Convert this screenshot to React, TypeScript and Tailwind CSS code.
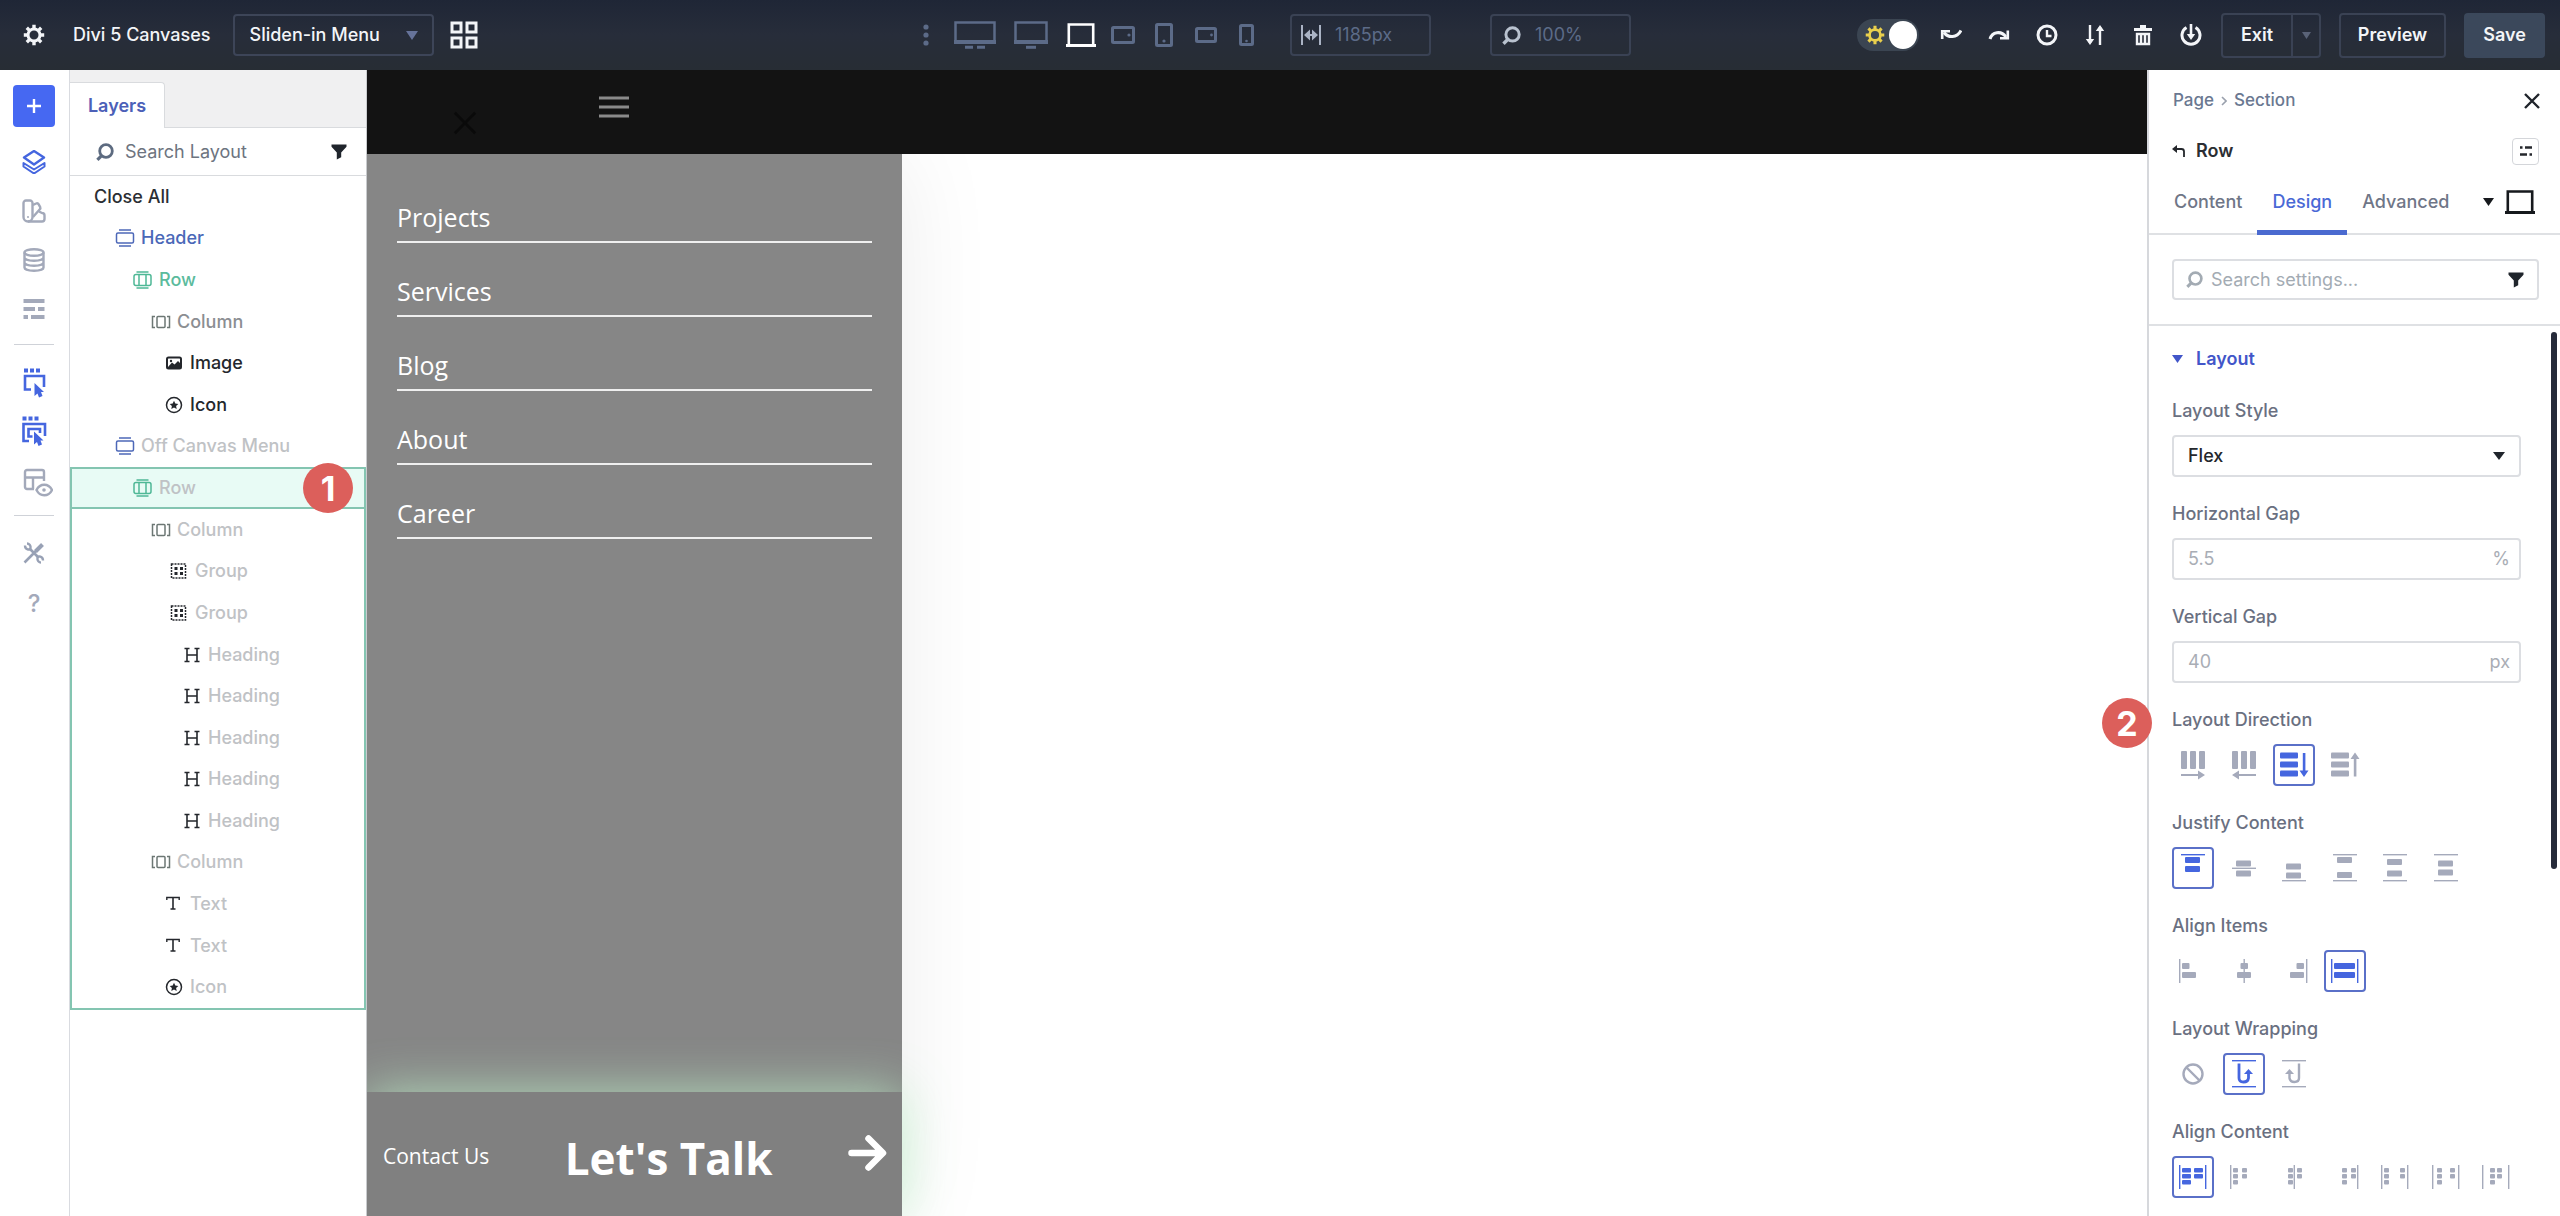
import React from 'react';

type Box = [number, number, number, number];

interface IconProps {
  className?: string;
}

/* ---------- Shared icons ---------- */

const Caret: React.FC<IconProps> = ({ className = 'w-3 h-2' }) => (
  <svg className={`shrink-0 ${className}`} viewBox="0 0 12 8" fill="currentColor" preserveAspectRatio="none">
    <path d="M0 0h12L6 8z" />
  </svg>
);

const SearchIcon: React.FC<IconProps> = ({ className = 'w-[18px] h-[18px]' }) => (
  <svg className={`shrink-0 ${className}`} viewBox="0 0 18 18" fill="none" stroke="currentColor" strokeWidth="2.8">
    <circle cx="10" cy="8" r="6.3" />
    <path d="M5.6 12.6L1.4 16.8" strokeWidth="3.2" />
  </svg>
);

const FilterIcon: React.FC<IconProps> = ({ className = '' }) => (
  <svg className={`w-4 h-4 shrink-0 ${className}`} viewBox="0 0 16 16" fill="#20252c">
    <path d="M.5.5h15v2.2L10.2 8.6v4.6L5.8 15.6v-7L.5 2.7z" />
  </svg>
);

const GearIcon: React.FC<IconProps> = ({ className = '' }) => (
  <svg className={`shrink-0 ${className}`} viewBox="0 0 22 22" fill="none" stroke="currentColor">
    <circle cx="11" cy="11" r="6" strokeWidth="3" />
    <path
      d="M11 4.5V.8M11 17.5v3.7M4.5 11H.8M17.5 11h3.7M6.4 6.4L3.8 3.8M15.6 15.6l2.6 2.6M6.4 15.6l-2.6 2.6M15.6 6.4l2.6-2.6"
      strokeWidth="3.4"
    />
  </svg>
);

const LaptopIcon: React.FC<IconProps> = ({ className = '' }) => (
  <svg className={`shrink-0 ${className}`} viewBox="0 0 30 24" fill="none" stroke="currentColor" strokeWidth="2.6">
    <path d="M2.8 22V1.5h24.4V22" />
    <path d="M0 22.5h30" strokeWidth="3" />
  </svg>
);

/* ---------- Top bar ---------- */

const MonitorWide = () => (
  <svg className="w-[42px] h-7" viewBox="0 0 42 28" fill="none" stroke="currentColor" strokeWidth="2.5">
    <path d="M1.5 1.5h39v20h-39z" />
    <path d="M0 21h42" strokeWidth="4" />
    <path d="M11 26.3h8M23 26.3h8" strokeWidth="3" />
  </svg>
);

const Monitor = () => (
  <svg className="w-[34px] h-7" viewBox="0 0 34 28" fill="none" stroke="currentColor" strokeWidth="2.5">
    <path d="M1.5 1.5h31v20h-31z" />
    <path d="M0 21h34" strokeWidth="4" />
    <path d="M12 26.3h10" strokeWidth="3" />
  </svg>
);

const TabletWide = () => (
  <svg className="w-6 h-[18px]" viewBox="0 0 24 18" fill="none" stroke="currentColor" strokeWidth="3">
    <rect x="1.5" y="1.5" width="21" height="15" rx="1" />
    <circle cx="18" cy="9" r="1.6" fill="currentColor" stroke="none" />
  </svg>
);

const Tablet = () => (
  <svg className="w-[18px] h-6" viewBox="0 0 18 24" fill="none" stroke="currentColor" strokeWidth="3">
    <rect x="1.5" y="1.5" width="15" height="21" rx="1" />
    <circle cx="9" cy="18" r="1.6" fill="currentColor" stroke="none" />
  </svg>
);

const PhoneWide = () => (
  <svg className="w-[22px] h-4" viewBox="0 0 22 16" fill="none" stroke="currentColor" strokeWidth="3">
    <rect x="1.5" y="1.5" width="19" height="13" rx="1" />
    <circle cx="16.5" cy="8" r="1.4" fill="currentColor" stroke="none" />
  </svg>
);

const Phone = () => (
  <svg className="w-[15px] h-[22px]" viewBox="0 0 15 22" fill="none" stroke="currentColor" strokeWidth="3">
    <rect x="1.5" y="1.5" width="12" height="19" rx="1" />
    <circle cx="7.5" cy="17" r="1.3" fill="currentColor" stroke="none" />
  </svg>
);

const WidthIcon = () => (
  <svg className="w-5 h-5 shrink-0" viewBox="0 0 20 20" stroke="currentColor" strokeWidth="2" fill="none">
    <path d="M1 0v20M19 0v20M4 10h12" />
    <path d="M9 4.5v11L3 10zM11 4.5v11l6-5.5z" fill="currentColor" stroke="none" />
  </svg>
);

const actions = [
  {
    label: 'Undo',
    icon: (
      <>
        <path d="M4 8.5c4 5.500 13 6 17-2" />
        <path d="M2.2 15V6M1 7.2h9" strokeWidth="2.6" />
      </>
    ),
  },
  {
    label: 'Redo',
    icon: (
      <>
        <path d="M2 15c2-7 11-9 16-2" />
        <path d="M19.8 6.5v9M21 14.3h-9" strokeWidth="2.6" />
      </>
    ),
  },
  {
    label: 'History',
    icon: (
      <>
        <circle cx="11" cy="11" r="9" />
        <path d="M11 6v6h4.5" strokeWidth="2.4" />
      </>
    ),
  },
  {
    label: 'Portability',
    icon: (
      <>
        <path d="M6 1v18M16 3v18" strokeWidth="2.4" />
        <path d="M1.8 15h8.4L6 21zM11.8 7h8.4L16 1z" fill="currentColor" stroke="none" />
      </>
    ),
  },
  {
    label: 'Clear layout',
    icon: (
      <>
        <path d="M2 5.5h18M8 2.5h6" strokeWidth="3" />
        <path d="M5 10v10h12V10zM9 11v9M13 11v9" strokeWidth="2.4" />
      </>
    ),
  },
  {
    label: 'Save to library',
    icon: (
      <>
        <path d="M6.5 3.5a9 9 0 1 0 9 0" />
        <path d="M11 0v13" strokeWidth="2.6" />
        <path d="M6.8 10h8.4L11 16z" fill="currentColor" stroke="none" />
      </>
    ),
  },
];

const TopBar: React.FC = () => (
  <header className="relative z-20 flex h-[70px] items-center justify-between bg-linear-to-b from-[#1f2636] via-[#272d3a] to-[#272d34] text-[#f3f5f8]">
    <div className="flex flex-1 items-center pl-[23px]">
      <button aria-label="Settings" className="mr-7">
        <GearIcon className="w-[22px] h-[22px]" />
      </button>
      <span className="mr-[22px] text-lg font-medium">Divi 5 Canvases</span>
      <div className="mr-4 flex h-[42px] w-[201px] items-center rounded-sm border-2 border-[#3d4558] pl-[15px] pr-[14px]">
        <select aria-label="Canvas" className="flex-1 appearance-none bg-transparent text-lg font-medium outline-none">
          <option>Sliden-in Menu</option>
        </select>
        <Caret className="w-3 h-[9px] text-[#66739a]" />
      </div>
      <button aria-label="All canvases">
        <svg className="w-7 h-7" viewBox="0 0 28 28" fill="none" stroke="currentColor" strokeWidth="3">
          <path d="M2 2h9v9H2zM17 2h9v9h-9zM2 17h9v9H2zM17 17h9v9h-9z" />
        </svg>
      </button>
    </div>

    <div className="flex items-center pr-[14px] text-[#5c6b88]">
      <svg className="mr-[25px] w-1.5 h-[22px]" viewBox="0 0 6 22" fill="currentColor">
        <circle cx="3" cy="3" r="2.6" />
        <circle cx="3" cy="11" r="2.6" />
        <circle cx="3" cy="19" r="2.6" />
      </svg>
      <button aria-label="Ultra wide" className="mr-[18px]"><MonitorWide /></button>
      <button aria-label="Wide" className="mr-[18px]"><Monitor /></button>
      <button aria-label="Desktop" className="mr-[15px] text-white"><LaptopIcon className="w-[30px] h-6" /></button>
      <button aria-label="Tablet wide" className="mr-5"><TabletWide /></button>
      <button aria-label="Tablet" className="mr-[22px]"><Tablet /></button>
      <button aria-label="Phone wide" className="mr-[22px]"><PhoneWide /></button>
      <button aria-label="Phone" className="mr-9"><Phone /></button>
      <label className="mr-[59px] flex h-[42px] w-[141px] items-center gap-[14px] rounded-sm border-2 border-[#3a4254] px-[9px]">
        <span className="text-[#aab3c4]"><WidthIcon /></span>
        <input aria-label="Canvas width" defaultValue="1185px" className="w-full min-w-0 bg-transparent text-lg outline-none" />
      </label>
      <label className="flex h-[42px] w-[141px] items-center gap-[14px] rounded-sm border-2 border-[#3a4254] px-[10px]">
        <SearchIcon className="w-[19px] h-[19px] text-[#b9c2cf]" />
        <input aria-label="Zoom" defaultValue="100%" className="w-full min-w-0 bg-transparent text-lg outline-none" />
      </label>
    </div>

    <div className="flex flex-1 items-center justify-end pr-[15px]">
      <button role="switch" aria-checked="true" aria-label="Light mode" className="mr-[21px] flex h-8 w-[62px] items-center justify-between rounded-full bg-[#3b4552] pl-2 pr-0.5">
        <GearIcon className="w-5 h-5 text-[#e9cf4d]" />
        <span className="h-7 w-7 rounded-full bg-white" />
      </button>
      <div className="mr-[19px] flex items-center gap-[26px]">
        {actions.map(({ label, icon }) => (
          <button key={label} aria-label={label}>
            <svg className="w-[22px] h-[22px]" viewBox="0 0 22 22" fill="none" stroke="currentColor" strokeWidth="3">
              {icon}
            </svg>
          </button>
        ))}
      </div>
      <div className="mr-[18px] flex h-[45px] rounded-sm border-2 border-[#3a4254]">
        <button className="w-[68px] text-lg font-semibold">Exit</button>
        <button aria-label="Exit options" className="flex w-7 items-center justify-center border-l-2 border-[#3a4254] text-[#5a6378]">
          <Caret className="w-[9px] h-[7px]" />
        </button>
      </div>
      <button className="mr-[18px] h-[45px] w-[107px] rounded-sm border-2 border-[#3a4254] text-lg font-semibold">Preview</button>
      <button className="h-[45px] w-[81px] rounded-sm bg-[#3b485b] text-lg font-semibold">Save</button>
    </div>
  </header>
);

/* ---------- Icon rail ---------- */

const railTop = [
  {
    label: 'Layers',
    color: 'text-[#4566df]',
    icon: (
      <>
        <path d="M12 1L22 7.500 12 14.500 2 7.500z" />
        <path d="M1.500 13v3.500L12 23.500l10.500-7V13L12 19.500z" strokeWidth="2" />
      </>
    ),
  },
  {
    label: 'Presets',
    color: 'text-[#a3a9ba]',
    icon: (
      <>
        <path d="M4 1.5h4a2.5 2.5 0 0 1 2.5 2.5v14a4.5 4.5 0 0 1-9 0V4A2.5 2.5 0 0 1 4 1.5z" />
        <path d="M11 6l3-1.5a2 2 0 0 1 2.7.8l1.5 2.8a2 2 0 0 1-.6 2.4L11 18" />
        <path d="M17 12.5l3 1.5a2.5 2.5 0 0 1 2.5 2.5v3.500a2.5 2.5 0 0 1-2.5 2.5H6" />
        <circle cx="6" cy="18" r="1" fill="currentColor" stroke="none" />
      </>
    ),
  },
  {
    label: 'Variables',
    color: 'text-[#a3a9ba]',
    icon: (
      <>
        <ellipse cx="12" cy="4.500" rx="9.500" ry="3.200" />
        <path d="M2.500 4.500v15c0 1.800 4 3.200 9.500 3.200s9.500-1.400 9.500-3.200v-15M2.500 9.500c0 1.800 4 3.200 9.500 3.200s9.500-1.400 9.500-3.200M2.500 14.500c0 1.800 4 3.200 9.500 3.200s9.500-1.400 9.500-3.200" />
      </>
    ),
  },
  {
    label: 'Wireframe',
    color: 'text-[#a3a9ba]',
    icon: <path d="M1.500 4h21M1.500 12H13M16 12h6.500M1.500 20H6M9 20h13.500" strokeWidth="4.200" />,
  },
];

const railMid = [
  {
    label: 'Select',
    icon: (
      <>
        <path d="M3 3.500h4M9 3.500h4M15 3.500h4" strokeWidth="4" />
        <path d="M10 22.500H4V9h19v11" />
        <path d="M13.500 16l9.500 9h-3l1.500 4-3.500 1.500-1.500-4-3 2.500z" fill="currentColor" stroke="none" />
      </>
    ),
  },
  {
    label: 'Multi select',
    icon: (
      <>
        <path d="M1.500 2.500h4M7.500 2.500h4M13.500 2.500h4" strokeWidth="4" />
        <path d="M8 25H2.500V8h21.500v12" />
        <path d="M11.500 20.500H7.500v-7.500h11.500v4" />
        <path d="M13 15.500l9.500 9h-3l1.500 4-3.500 1.500-1.500-4-3 2.500z" fill="currentColor" stroke="none" />
      </>
    ),
  },
];

const IconRail: React.FC = () => (
  <nav className="flex w-[70px] shrink-0 flex-col items-center border-r border-[#d9dbe0] bg-white pt-[15px] pr-px">
    <button aria-label="Add" className="mb-[23px] flex h-[42px] w-[42px] items-center justify-center rounded-sm bg-[#4668f2] text-white">
      <svg className="w-4 h-4" viewBox="0 0 16 16" stroke="currentColor" strokeWidth="2.400">
        <path d="M8 1v14M1 8h14" />
      </svg>
    </button>
    <div className="flex flex-col items-center gap-[25px]">
      {railTop.map(({ label, color, icon }) => (
        <button key={label} aria-label={label} className={color}>
          <svg className="w-6 h-6" viewBox="0 0 24 24" fill="none" stroke="currentColor" strokeWidth="2.400" strokeLinejoin="round">
            {icon}
          </svg>
        </button>
      ))}
    </div>
    <hr className="mt-[23px] mb-[22px] w-10 border-[#cfd2d8]" />
    <div className="flex flex-col items-center gap-[18px] text-[#4566df]">
      {railMid.map(({ label, icon }) => (
        <button key={label} aria-label={label}>
          <svg className="w-[26px] h-[31px]" viewBox="0 0 26 31" fill="none" stroke="currentColor" strokeWidth="2.600">
            {icon}
          </svg>
        </button>
      ))}
    </div>
    <button aria-label="Canvas view" className="mt-[21px] ml-[7px] text-[#a3a9ba]">
      <svg className="w-[30px] h-[30px]" viewBox="0 0 30 30" fill="none" stroke="currentColor" strokeWidth="2.400">
        <path d="M11 21H4a2 2 0 0 1-2-2V4a2 2 0 0 1 2-2h15a2 2 0 0 1 2 2v9M2 9.500h19M10 9.500V21" />
        <path d="M13.500 22c3.500-7 12-7 15.500 0-3.500 7-12 7-15.500 0z" />
        <circle cx="21" cy="22" r="1.800" fill="currentColor" stroke="none" />
      </svg>
    </button>
    <hr className="mt-[17px] mb-[26px] w-10 border-[#cfd2d8]" />
    <button aria-label="Tools" className="text-[#98a1b5]">
      <svg className="w-[22px] h-[22px]" viewBox="0 0 22 22" fill="none" stroke="currentColor" strokeWidth="3">
        <path d="M1.500 20.500L13 9M7 7l8 8" strokeWidth="2.600" />
        <path d="M12.500 9.500L19.500 2.500" strokeWidth="4" />
        <path d="M2 3.500C2 8 7 8.500 7.500 6S6 1.500 4 1.500" strokeWidth="2.400" />
        <path d="M20 18.500c0-4.500-5-5-5.500-2.500s1.500 4.500 3.500 4.500" strokeWidth="2.400" />
      </svg>
    </button>
    <button aria-label="Help" className="mt-6 text-2xl font-medium text-[#a3a9ba]">?</button>
  </nav>
);

/* ---------- Layers panel ---------- */

type LayerKind = 'section' | 'row' | 'column' | 'image' | 'icon' | 'group' | 'heading' | 'text';

const layerIcons: Record<LayerKind, React.ReactNode> = {
  section: (
    <g stroke="#4d68b8">
      <path d="M4 1h12M4 17h12" />
      <rect x="1.500" y="4" width="17" height="10" rx="1.500" />
    </g>
  ),
  row: (
    <g stroke="#4fb896">
      <path d="M3.500 1h12M3.500 17h12" />
      <rect x="1" y="3.500" width="17" height="11" rx="2" />
      <path d="M6 3.500v11M13 3.500v11" />
    </g>
  ),
  column: (
    <g stroke="#6c7774">
      <path d="M4 3.500H1.500v11H4M16 3.500h2.500v11H16" />
      <rect x="6" y="3.500" width="8" height="11" rx="1" />
    </g>
  ),
  image: (
    <g stroke="#24272c" strokeWidth="2">
      <rect x="3" y="3.500" width="14" height="11" rx="1.500" />
      <path d="M4 13l4-4.500 2.500 2L14 7l3 3v4H4z" fill="#24272c" stroke="none" />
      <circle cx="7" cy="7" r="1.200" fill="#24272c" stroke="none" />
    </g>
  ),
  icon: (
    <g stroke="#24272c">
      <circle cx="10" cy="9" r="7.500" />
      <path
        d="M10 4.800l1.300 2.700 3 .4-2.200 2 .6 3-2.700-1.500-2.700 1.500.6-3-2.200-2 3-.4z"
        fill="#24272c"
        stroke="none"
      />
    </g>
  ),
  group: (
    <g stroke="#24272c">
      <rect x="2.500" y="2" width="14" height="14" strokeDasharray="2 1" />
      <path d="M5.500 6.500h3M11 6.500h3M5.500 11.500h3M11 11.500h3" strokeWidth="3" />
    </g>
  ),
  heading: (
    <g stroke="#24272c" strokeWidth="1.600">
      <path d="M5 3v12M15 3v12M5 9h10" />
      <path d="M2.500 2.500h5M12.500 2.500h5M2.500 15.500h5M12.500 15.500h5" strokeWidth="1.400" />
    </g>
  ),
  text: (
    <g stroke="#24272c" strokeWidth="1.600">
      <path d="M9 2v12" />
      <path d="M2.800 5V2.500h12.400V5M6.500 14h5" strokeWidth="1.400" />
    </g>
  ),
};

interface LayerProps {
  kind: LayerKind;
  label: string;
  indent: string;
  color?: string;
}

const Layer: React.FC<LayerProps> = ({ kind, label, indent, color = 'text-[#bfc2c5]' }) => (
  <div className={`flex flex-1 items-center gap-1.5 ${indent}`}>
    <svg className="w-5 h-[18px] shrink-0" viewBox="0 0 20 18" fill="none" strokeWidth="1.500">
      {layerIcons[kind]}
    </svg>
    <span className={`text-lg font-medium ${color}`}>{label}</span>
  </div>
);

const selectedLayers: LayerProps[] = [
  { kind: 'column', label: 'Column', indent: 'pl-[79px]' },
  { kind: 'group', label: 'Group', indent: 'pl-[97px]' },
  { kind: 'group', label: 'Group', indent: 'pl-[97px]' },
  { kind: 'heading', label: 'Heading', indent: 'pl-[110px]' },
  { kind: 'heading', label: 'Heading', indent: 'pl-[110px]' },
  { kind: 'heading', label: 'Heading', indent: 'pl-[110px]' },
  { kind: 'heading', label: 'Heading', indent: 'pl-[110px]' },
  { kind: 'heading', label: 'Heading', indent: 'pl-[110px]' },
  { kind: 'column', label: 'Column', indent: 'pl-[79px]' },
  { kind: 'text', label: 'Text', indent: 'pl-[92px]' },
  { kind: 'text', label: 'Text', indent: 'pl-[92px]' },
  { kind: 'icon', label: 'Icon', indent: 'pl-[92px]' },
];

const Badge: React.FC<{ children: React.ReactNode; className: string }> = ({ children, className }) => (
  <span className={`absolute z-10 flex h-[50px] w-[50px] items-center justify-center rounded-full bg-[#dc5f5b] text-[34px] font-bold text-white ${className}`}>
    {children}
  </span>
);

const LayersPanel: React.FC = () => (
  <aside className="w-[297px] shrink-0 border-r border-[#c9cbce] bg-white">
    <div className="flex h-[58px] items-end border-b border-[#d9dbde] bg-[#f0f0f1]">
      <button className="-mb-px h-[46px] w-[95px] rounded-tr-sm border-t border-r border-[#d9dbde] bg-white text-lg font-semibold text-[#4c60b8]">
        Layers
      </button>
    </div>
    <label className="flex h-12 items-center border-b border-[#d9dbde] pl-[26px] pr-[19px]">
      <SearchIcon className="w-[18px] h-[18px] text-[#5d6b80]" />
      <input
        aria-label="Search layout"
        placeholder="Search Layout"
        className="ml-[11px] w-full min-w-0 text-lg outline-none placeholder:text-[#6d7480]"
      />
      <FilterIcon />
    </label>

    <div className="flex h-[291px] flex-col">
      <button className="flex flex-1 items-center pl-6 text-lg font-medium text-[#2b2e33]">Close All</button>
      <Layer kind="section" label="Header" indent="pl-[45px]" color="text-[#4a68b8]" />
      <Layer kind="row" label="Row" indent="pl-[63px]" color="text-[#5bbb9d]" />
      <Layer kind="column" label="Column" indent="pl-[81px]" color="text-[#8b8e92]" />
      <Layer kind="image" label="Image" indent="pl-[94px]" color="text-[#24272c]" />
      <Layer kind="icon" label="Icon" indent="pl-[94px]" color="text-[#24272c]" />
      <Layer kind="section" label="Off Canvas Menu" indent="pl-[45px]" />
    </div>

    <div className="border-2 border-[#84c5b1]">
      <div className="relative flex h-10 border-b-2 border-[#84c5b1] bg-[#e8fbf5]">
        <Layer kind="row" label="Row" indent="pl-[61px]" />
        <Badge className="-top-[6px] right-[11px]">1</Badge>
      </div>
      <div className="flex h-[499px] flex-col">
        {selectedLayers.map((layer, i) => (
          <Layer key={i} {...layer} />
        ))}
      </div>
    </div>
  </aside>
);

/* ---------- Canvas ---------- */

const menuItems = ['Projects', 'Services', 'Blog', 'About', 'Career'];

const Canvas: React.FC = () => (
  <main className="flex min-w-0 flex-1 flex-col overflow-hidden bg-white font-['Open_Sans',sans-serif]">
    <div className="relative z-10 flex h-[84px] shrink-0 bg-[#131313]">
      <button aria-label="Close menu" className="mt-[41px] ml-[86px] h-6 text-[#0a0a0a]">
        <svg className="w-6 h-6" viewBox="0 0 26 26" stroke="currentColor" strokeWidth="3">
          <path d="M2 2l22 22M24 2L2 24" />
        </svg>
      </button>
      <button aria-label="Open menu" className="mt-[26px] ml-[122px] h-[23px] text-[#8a8a8a]">
        <svg className="w-[30px] h-[23px]" viewBox="0 0 30 23" stroke="currentColor" strokeWidth="3">
          <path d="M0 2h30M0 11h30M0 20h30" />
        </svg>
      </button>
    </div>
    <div className="flex w-[535px] flex-1 flex-col bg-[#868686] text-white shadow-[0_0_90px_rgba(0,0,0,0.08)]">
      <nav className="px-[30px] pt-[15px]">
        {menuItems.map((item) => (
          <a key={item} href="#" className="block h-[74px] border-b-2 border-[#efefef] pt-8 text-[25px] leading-8">
            {item}
          </a>
        ))}
      </nav>
      <div className="mt-auto flex h-[124px] items-center justify-between bg-[#808080] pl-4 pr-[15px] pt-1 shadow-[0_0_50px_rgba(190,240,200,0.8)]">
        <a href="#" className="text-[21px] leading-8">Contact Us</a>
        <p className="pt-1 text-[44px] font-bold">Let&apos;s Talk</p>
        <a href="#" aria-label="Contact" className="mb-1.5">
          <svg className="w-[39px] h-9" viewBox="0 0 39 36" fill="none" stroke="currentColor" strokeWidth="6.500" strokeLinecap="round" strokeLinejoin="round">
            <path d="M3.500 18h31M20.500 3.500L35 18 20.500 32.500" />
          </svg>
        </a>
      </div>
    </div>
  </main>
);

/* ---------- Settings panel ---------- */

// Vertical and horizontal guide lines plus blocks on a 28px grid
const Blocks: React.FC<{ v?: number[]; h?: number[]; boxes: Box[] }> = ({ v = [], h = [], boxes }) => (
  <g>
    {v.map((x) => (
      <rect key={`v${x}`} x={x} y="2" width="1.400" height="24" />
    ))}
    {h.map((y) => (
      <rect key={`h${y}`} x="2" y={y} width="24" height="1.400" />
    ))}
    {boxes.map(([x, y, w, ht], i) => (
      <rect key={i} x={x} y={y} width={w} height={ht} rx="1" />
    ))}
  </g>
);

const bars = (y1: number, y2: number): Box[] => [
  [6, y1, 15, 6],
  [6, y2, 15, 6],
];

const dots = (x1: number, x2: number, w = 5): Box[] => [
  [x1, 5, w, 4.5],
  [x1, 11, w, 4.5],
  [x1, 17, w, 4.5],
  [x2, 5, w, 4.5],
  [x2, 11, w, 4.5],
];

const columns: Box[] = [
  [2, 0, 6, 18],
  [11, 0, 6, 18],
  [20, 0, 6, 18],
];

const rows: Box[] = [
  [0, 1.5, 18, 6],
  [0, 10.5, 18, 6],
  [0, 19.5, 18, 6],
];

const layoutDirection = [
  <g><Blocks boxes={columns} /><path d="M2 23h17v-3.500l7 4.500-7 4.500V25H2z" /></g>,
  <g><Blocks boxes={columns} /><path d="M26 23H9v-3.500L2 24l7 4.500V25h17z" /></g>,
  <g><Blocks boxes={rows} /><path d="M22.800 2h2.600v17.500h3.100L24 26l-4.500-6.500h3.300z" /></g>,
  <g><Blocks boxes={rows} /><path d="M22.800 25.500h2.600V8h3.100L24 1.500 19.500 8h3.300z" /></g>,
];

const justifyContent = [
  <Blocks h={[0]} boxes={bars(3, 12)} />,
  <Blocks h={[13.6]} boxes={bars(6.5, 16.5)} />,
  <Blocks h={[26]} boxes={bars(9.5, 18.5)} />,
  <Blocks h={[0, 26]} boxes={bars(3, 18)} />,
  <Blocks h={[0, 26]} boxes={bars(5, 16.5)} />,
  <Blocks h={[0, 26]} boxes={bars(6.5, 15.5)} />,
];

const alignItems = [
  <Blocks v={[0]} boxes={[[3, 6, 7.5, 6], [3, 15, 14, 6]]} />,
  <Blocks v={[13.5]} boxes={[[10.5, 6, 7.5, 6], [7, 15, 14, 6]]} />,
  <Blocks v={[26]} boxes={[[16.5, 6, 7.5, 6], [10, 15, 14, 6]]} />,
  <Blocks v={[0, 26]} boxes={[[3, 6, 21, 6], [3, 15, 21, 6]]} />,
];

const layoutWrapping = [
  <g fill="none" stroke="currentColor" strokeWidth="2.400">
    <circle cx="14" cy="14" r="9.500" />
    <path d="M7.500 7.500l13 13" />
  </g>,
  <g>
    <Blocks h={[0, 26]} boxes={[]} />
    <path d="M9 3.500V18q0 4 4.500 4t5-4v-6" fill="none" stroke="currentColor" strokeWidth="2.800" />
    <path d="M14 14l4.500-5 4.500 5z" />
  </g>,
  <g>
    <Blocks h={[0, 26]} boxes={[]} />
    <path d="M19 3.500V18q0 4-4.500 4t-5-4v-6" fill="none" stroke="currentColor" strokeWidth="2.400" />
    <path d="M5 14l4.500-5 4.500 5z" />
  </g>,
];

const alignContent = [
  <Blocks v={[0, 26]} boxes={dots(3, 15, 9)} />,
  <Blocks v={[0]} boxes={dots(3, 12)} />,
  <Blocks v={[13.6]} boxes={dots(8, 17)} />,
  <Blocks v={[26]} boxes={dots(11, 20)} />,
  <Blocks v={[0, 26]} boxes={dots(3, 19)} />,
  <Blocks v={[0, 26]} boxes={dots(5, 18)} />,
  <Blocks v={[0, 26]} boxes={dots(8, 15)} />,
];

const Field: React.FC<{ label: string; htmlFor?: string; children: React.ReactNode }> = ({ label, htmlFor, children }) => (
  <div className="mb-[25px]">
    <label htmlFor={htmlFor} className="mb-3 block text-lg leading-6 font-medium text-[#6a7081]">{label}</label>
    {children}
  </div>
);

const NumberField: React.FC<{ label: string; id: string; value: string; unit: string }> = ({ label, id, value, unit }) => (
  <Field label={label} htmlFor={id}>
    <div className="flex h-[42px] items-center rounded-sm border-2 border-[#dcdee2] pl-[14px] pr-[9px] text-lg text-[#a9adb5]">
      <input id={id} placeholder={value} className="w-full min-w-0 outline-none placeholder:text-[#a9adb5]" />
      <span>{unit}</span>
    </div>
  </Field>
);

const ButtonField: React.FC<{ label: string; icons: React.ReactNode[]; active: number }> = ({ label, icons, active }) => (
  <div className="mb-[25px]" role="group" aria-label={label}>
    <p className="mb-3 text-lg leading-6 font-medium text-[#6a7081]">{label}</p>
    <div className="-mr-[5px] grid grid-cols-7">
      {icons.map((icon, i) => (
        <button
          key={i}
          aria-label={`${label} ${i + 1}`}
          aria-pressed={i === active}
          className={
            i === active
              ? 'flex h-[42px] w-[42px] items-center justify-center rounded-sm border-2 border-[#5a70c8] text-[#4566df]'
              : 'flex h-[42px] w-[42px] items-center justify-center text-[#a5aabb]'
          }
        >
          <svg className="w-7 h-7 shrink-0 overflow-visible" viewBox="0 0 28 28" fill="currentColor">
            {icon}
          </svg>
        </button>
      ))}
    </div>
  </div>
);

const SettingsPanel: React.FC = () => (
  <aside className="relative w-[413px] shrink-0 border-l-2 border-[#d6d8dc] bg-white">
    <Badge className="top-[628px] -left-[47px]">2</Badge>

    <div className="flex h-[61px] items-center justify-between pl-6 pr-5">
      <nav className="flex items-center gap-[7px] text-[17px] font-medium text-[#6a7891]">
        <a href="#">Page</a>
        <svg className="w-1.5 h-3" viewBox="0 0 6 12" fill="none" stroke="#9aa1ad" strokeWidth="1.600">
          <path d="M1 2l4 4-4 4" />
        </svg>
        <a href="#">Section</a>
      </nav>
      <button aria-label="Close">
        <svg className="w-4 h-4" viewBox="0 0 16 16" stroke="#20242b" strokeWidth="2.400">
          <path d="M1 1l14 14M15 1L1 15" />
        </svg>
      </button>
    </div>

    <div className="flex h-10 items-center justify-between pl-[23px] pr-[21px]">
      <div className="flex items-center gap-[11px]">
        <button aria-label="Back">
          <svg className="w-[13px] h-3" viewBox="0 0 13 12" fill="none" stroke="#24272c" strokeWidth="1.800">
            <path d="M3 4h6.500a2.500 2.500 0 0 1 2.500 2.500V12" />
            <path d="M5 0v8L0 4z" fill="#24272c" stroke="none" />
          </svg>
        </button>
        <h2 className="text-lg font-semibold text-[#2b2e33]">Row</h2>
      </div>
      <button aria-label="Presets" className="flex h-[27px] w-[27px] items-center justify-center rounded-sm border border-[#d4d6da]">
        <svg className="w-3 h-3" viewBox="0 0 12 12" stroke="#24272c" strokeWidth="2.600">
          <path d="M0 2.500h2.500M5 2.500h7M0 9.500h7M9.500 9.500H12" />
        </svg>
      </button>
    </div>

    <div className="flex h-16 items-stretch border-b-2 border-[#dfe1e4] pl-[10px] text-lg font-medium text-[#6f7687]">
      <button className="px-[15px]">Content</button>
      <button className="-mb-0.5 border-b-5 border-[#4a6ad0] px-[15px] pt-[3px] text-[#4a69d6]">Design</button>
      <button className="px-[15px]">Advanced</button>
      <button aria-label="Responsive view" className="ml-auto flex items-center gap-[11px] pr-[25px] text-[#16191d]">
        <Caret className="w-[11px] h-2" />
        <LaptopIcon className="w-[30px] h-6" />
      </button>
    </div>

    <div className="border-b-2 border-[#dfe1e4] pt-6 pr-[21px] pb-6 pl-[23px]">
      <label className="flex h-[41px] items-center rounded-sm border-2 border-[#dcdee2] pl-[12px] pr-[13px]">
        <SearchIcon className="w-[17px] h-[17px] text-[#a3abb3]" />
        <input
          aria-label="Search settings"
          placeholder="Search settings..."
          className="ml-2 w-full min-w-0 text-lg outline-none placeholder:text-[#a3abb3]"
        />
        <FilterIcon />
      </label>
    </div>

    <div className="flex justify-between pt-[6px] pl-[23px]">
      <div className="w-[349px] pt-[15px]">
        <button className="mb-7 flex h-6 items-center gap-[13px] text-lg font-semibold text-[#4256c9]">
          <Caret className="w-[11px] h-2" />
          Layout
        </button>
        <Field label="Layout Style" htmlFor="layout-style">
          <div className="flex h-[42px] items-center rounded-sm border-2 border-[#dcdee2] pl-[14px] pr-[14px]">
            <select id="layout-style" className="flex-1 appearance-none text-lg font-medium text-[#24272c] outline-none">
              <option>Flex</option>
            </select>
            <Caret className="w-3 h-2 text-[#20252c]" />
          </div>
        </Field>
        <NumberField label="Horizontal Gap" id="horizontal-gap" value="5.5" unit="%" />
        <NumberField label="Vertical Gap" id="vertical-gap" value="40" unit="px" />
        <ButtonField label="Layout Direction" icons={layoutDirection} active={2} />
        <ButtonField label="Justify Content" icons={justifyContent} active={0} />
        <ButtonField label="Align Items" icons={alignItems} active={3} />
        <ButtonField label="Layout Wrapping" icons={layoutWrapping} active={1} />
        <ButtonField label="Align Content" icons={alignContent} active={0} />
      </div>
      <div className="mr-[3px] h-[537px] w-1.5 rounded-full bg-[#262b3a]" />
    </div>
  </aside>
);

const App: React.FC = () => {
  return (
    <div className="flex h-screen flex-col overflow-hidden font-[Inter,sans-serif]">
      <TopBar />
      <div className="flex min-h-0 flex-1">
        <IconRail />
        <LayersPanel />
        <Canvas />
        <SettingsPanel />
      </div>
    </div>
  );
};

export default App;
